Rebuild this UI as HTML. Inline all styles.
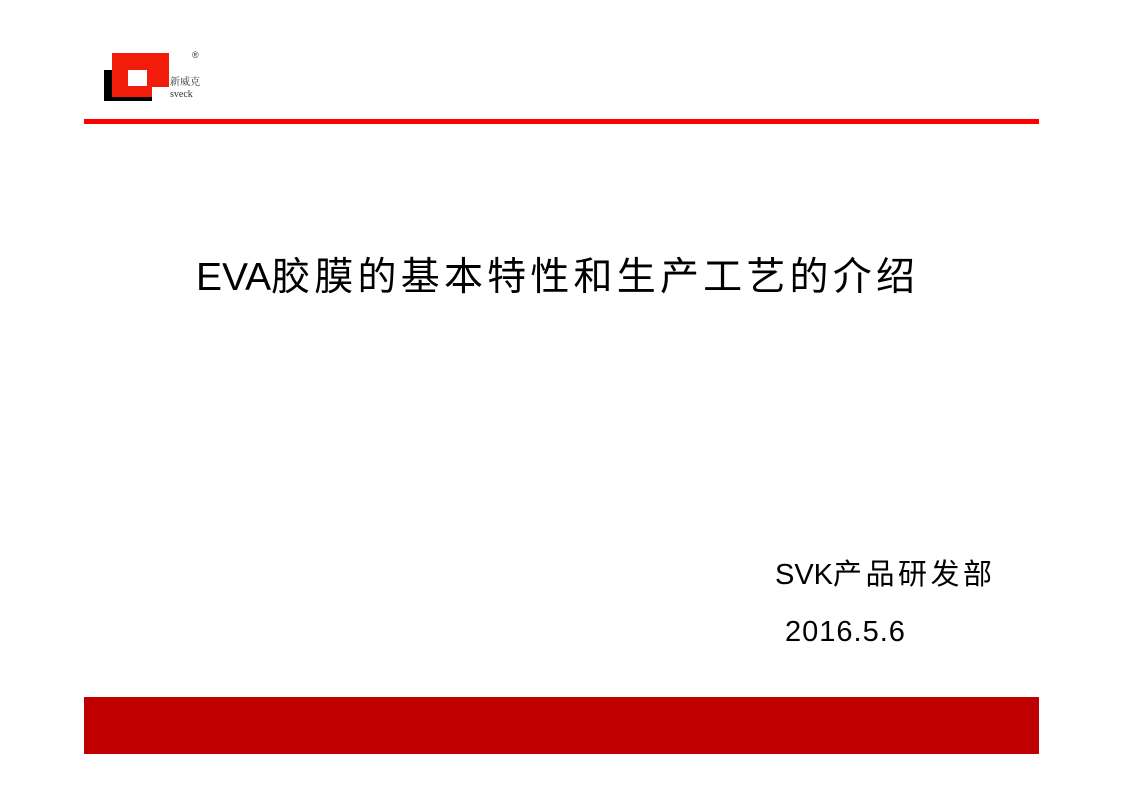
<!DOCTYPE html>
<html><head><meta charset="utf-8"><style>
body{margin:0;width:1121px;height:794px;background:#fff;position:relative;overflow:hidden;font-family:"Liberation Sans","Noto Sans CJK SC",sans-serif}
.a{position:absolute}
</style></head><body>
<div class="a" style="left:112px;top:53px;width:57px;height:34px;background:#f21c0a"></div>
<div class="a" style="left:104px;top:70px;width:48px;height:31px;background:#000"></div>
<div class="a" style="left:112px;top:64px;width:40px;height:33px;background:#f21c0a"></div>
<div class="a" style="left:128px;top:70px;width:19px;height:16px;background:#fff"></div>
<div class="a" style="left:170px;top:73px;font-size:10px;font-family:'Noto Serif CJK SC',serif;color:#333">新威克</div>
<div class="a" style="left:170px;top:89px;font-size:10px;font-family:'Liberation Serif',serif;color:#333">sveck</div>
<div class="a" style="left:192px;top:50px;font-size:9px;color:#333">®</div>
<div class="a" style="left:84px;top:119px;width:955px;height:5px;background:#f00"></div>
<div class="a" style="left:196px;top:254px;font-size:39px;color:#000;white-space:nowrap;line-height:48px">EVA<span style="letter-spacing:4.2px">胶膜的基本特性和生产工艺的介绍</span></div>
<div class="a" style="left:775px;top:557px;font-size:29px;color:#000;white-space:nowrap;line-height:36px">SVK<span style="letter-spacing:3.5px">产品研发部</span></div>
<div class="a" style="left:785px;top:614px;font-size:29px;letter-spacing:1px;color:#000;line-height:36px">2016.5.6</div>
<div class="a" style="left:84px;top:697px;width:955px;height:57px;background:#c00000"></div>
</body></html>
